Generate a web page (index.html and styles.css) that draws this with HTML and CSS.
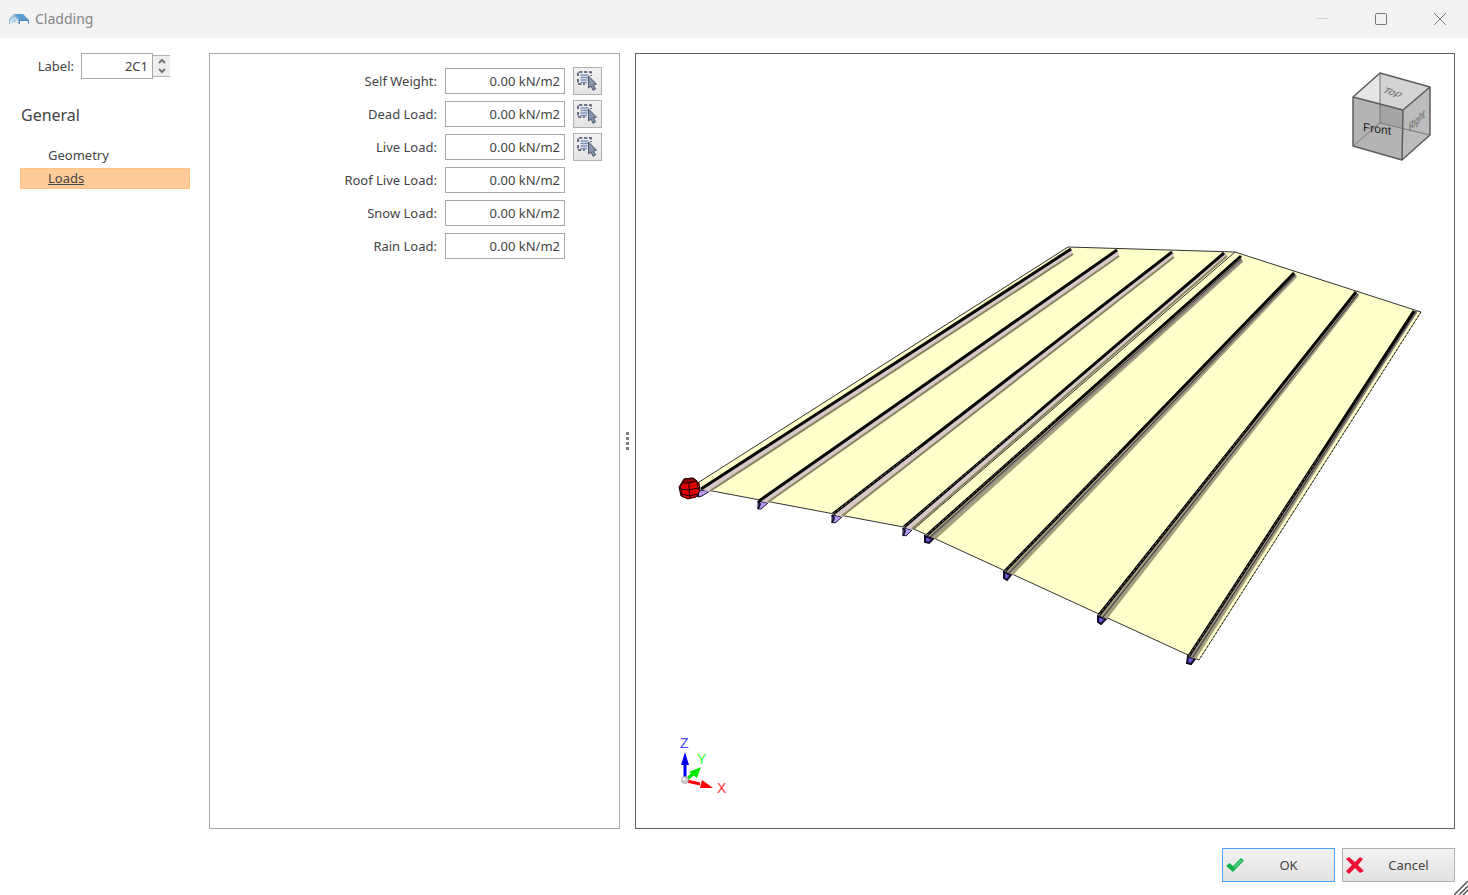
FILE: index.html
```html
<!DOCTYPE html>
<html lang="en">
<head>
<meta charset="utf-8">
<title>Cladding</title>
<link rel="stylesheet" href="styles.css">
</head>
<body>
<svg class="defs" aria-hidden="true">
  <symbol id="pick" viewBox="0 0 22 22">
    <path d="M1 6V2H14V6M1 9V14H8" fill="none" stroke="#474e68" stroke-width="1.6" stroke-dasharray="3.4 1.6"/>
    <path d="M3.500 5H11.500M3.500 7.500H11.500M3.500 10H10.500M3.500 12.500H10" stroke="#7d90bd" stroke-width="1.300"/>
    <path d="M11.500 6L19.500 14.200L16.500 14.700L18.500 19L16 20.300L14 16L11.500 18Z" fill="#8693a8" stroke="#4d586b" stroke-width="1"/>
  </symbol>
</svg>
<header class="titlebar">
  <svg class="app-icon" viewBox="0 0 20 12" aria-hidden="true">
    <path d="M5 1H14L20 7H10Z" fill="#5c9bd0"/>
    <path d="M5 1L0 6V11H1.200V7L5 4L9 7V11H10V6Z" fill="#8dbade"/>
    <path d="M10 7H20V11H19V8H11V11H10Z" fill="#4f87b8"/>
    <path d="M1 7H9M5 3V10M2 10L5 7L8 10" stroke="#8dbade" stroke-width=".8" fill="none"/>
  </svg>
  <h1 class="title">Cladding</h1>
  <button class="win-btn" aria-label="Minimize" disabled><svg viewBox="0 0 14 14"><path d="M2 6.500H14" stroke="#d4d4d4"/></svg></button>
  <button class="win-btn" aria-label="Maximize"><svg viewBox="0 0 14 14"><rect x="2.500" y="1.500" width="11" height="11" rx="1" fill="none" stroke="#777"/></svg></button>
  <button class="win-btn" aria-label="Close"><svg viewBox="0 0 14 14"><path d="M2 1L14 13M14 1L2 13" stroke="#777" fill="none"/></svg></button>
</header>

<main class="content">
  <aside class="sidebar">
    <div class="label-row">
      <label for="lbl">Label:</label>
      <input id="lbl" class="field label-input" type="text" value="2C1">
      <div class="spin">
        <button aria-label="Increase"><svg viewBox="0 0 8 6"><path d="M1 5L4 2L7 5" fill="none" stroke="#777" stroke-width="2"/></svg></button>
        <button aria-label="Decrease"><svg viewBox="0 0 8 6"><path d="M1 1L4 4L7 1" fill="none" stroke="#777" stroke-width="2"/></svg></button>
      </div>
    </div>
    <h2 class="group">General</h2>
    <nav class="nav">
      <a href="#geometry">Geometry</a>
      <a href="#loads" class="active" aria-current="page">Loads</a>
    </nav>
  </aside>

  <section class="form" aria-label="Loads">
    <label for="self">Self Weight:</label><input id="self" class="field" value="0.00 kN/m2"><button class="pick" aria-label="Pick self weight"><svg><use href="#pick"/></svg></button>
    <label for="dead">Dead Load:</label><input id="dead" class="field" value="0.00 kN/m2"><button class="pick" aria-label="Pick dead load"><svg><use href="#pick"/></svg></button>
    <label for="live">Live Load:</label><input id="live" class="field" value="0.00 kN/m2"><button class="pick" aria-label="Pick live load"><svg><use href="#pick"/></svg></button>
    <label for="roof">Roof Live Load:</label><input id="roof" class="field" value="0.00 kN/m2">
    <label for="snow">Snow Load:</label><input id="snow" class="field" value="0.00 kN/m2">
    <label for="rain">Rain Load:</label><input id="rain" class="field" value="0.00 kN/m2">
  </section>

  <div class="splitter" role="separator" aria-orientation="vertical"><i></i><i></i><i></i><i></i></div>

  <section class="viewer" aria-label="3D view">
    <svg class="scene" viewBox="636 54 818 774">
      <path d="M696 484L1068 247L1235 252L1421 312L1199 660L914 529L707 490Z" fill="#ffffcc"/>
      <g stroke="#333" stroke-width="1" fill="none">
        <path d="M696 484L1068 247L1235 252L1421 312M914 529L707 490M914 529L1199 660"/>
        <path d="M1421 312L1199 660" stroke="#8a8a70"/>
        <path d="M1421 312L1199 660" stroke="#111" stroke-dasharray="2 2"/>
        <path d="M914 529L1235 252"/>
      </g>
      <g fill="#b79cf5" stroke="#17122e" stroke-width="1">
        <path d="M699 490L710 491L702 496L698 497Z"/>
        <path d="M758 501L768 503L761 509L758 509Z"/>
        <path d="M832 515L842 517L835 523L832 522Z"/>
        <path d="M903 528L912 530L906 536L903 535Z"/>
        <path d="M698 490V497M758 501L760 504L758 509M832 515L834 518L832 523M903 528L905 531L903 536" stroke-width="2" fill="none"/>
      </g>
      <g fill="#6f55d0" stroke="#120d2a" stroke-width="2">
        <path d="M925 536L933 539L929 543L925 542Z"/>
        <path d="M1004 572L1011 575L1007 580L1004 578Z"/>
        <path d="M1098 616L1106 619L1101 624L1098 622Z"/>
        <path d="M1188 656L1195 659L1191 664L1187 663Z"/>
      </g>
      <g fill="#d8c8c8">
        <path d="M700 489L1071 248L1073 254L710 492Z"/>
        <path d="M758 500L1118 250L1119 255L768 503Z"/>
        <path d="M832 514L1173 251L1174 256L842 517Z"/>
        <path d="M903 527L1225 252L1228 255L912 530Z"/>
      </g>
      <g stroke="#8a8460" stroke-width="2" fill="none">
        <path d="M710 491L1073 254M768 502L1119 256M842 516L1174 257M912 529L1227 256"/>
      </g>
      <g fill="#a39f7c">
        <path d="M926 535L1240 256L1243 262L936 539Z"/>
        <path d="M1004 571L1294 272L1297 277L1013 575Z"/>
        <path d="M1098 615L1356 291L1359 296L1107 619Z"/>
        <path d="M1188 656L1413 310L1418 311L1196 659Z"/>
      </g>
      <g stroke="#8d7f84" stroke-width="2" fill="none">
        <path d="M931 537L1242 260M1009 573L1296 275M1103 617L1358 294M1192 658L1417 311"/>
      </g>
      <g stroke="#3a3433" stroke-width="1" fill="none">
        <path d="M930 537L1241 259M1009 573L1295 275M1103 617L1358 294M1193 657L1416 311"/>
      </g>
      <g stroke="#080808" stroke-width="3" fill="none">
        <path d="M701 489L1071 249M759 501L1117 250M833 514L1172 252M904 527L1224 253M927 535L1241 256M1005 571L1294 273M1099 615L1356 292M1189 656L1414 311"/>
      </g>
      <g stroke="#6d6468" stroke-width="1" stroke-dasharray="3 2" fill="none">
        <path d="M833 514L918 448M904 527L1034 415M927 535L1058 418M1005 571L1120 452M1099 615L1250 425M1189 656L1320 455"/>
      </g>
      <g stroke="#160000" stroke-width="1">
        <path d="M684 479L693 478L699 483L700 491L696 497L688 499L681 496L679 487Z" fill="#e00000"/>
        <path d="M684 479L693 478L697 481L689 483L682 483Z" fill="#900000"/>
        <path d="M682 483L680 489L689 490L698 488M689 483L689 490L690 498M697 482L698 488L700 491M682 496L681 489M690 496L697 494M682 494L690 496" fill="none"/>
      </g>
    </svg>
    <svg class="cube" viewBox="0 0 80 90" role="img" aria-label="View cube">
      <path d="M29 1L79 15L52 38L2 25Z" fill="#d4d4d4"/>
      <path d="M29 1V31L2 25Z" fill="#e6e6e6"/>
      <path d="M2 25L52 38L51 88L2 74Z" fill="#b4b4b4"/>
      <path d="M52 38L79 15V63L51 88Z" fill="#bcbcbc"/>
      <path d="M29 32L52 38V56L29 51Z" fill="#a4a4a4"/>
      <path d="M29 1V51L2 74M29 51L79 63" fill="none" stroke="#777"/>
      <path d="M29 1L79 15L52 38L2 25ZM2 25V74L51 88L79 63V15M52 38L51 88" fill="none" stroke="#5c5c5c" stroke-width="1.500" stroke-linejoin="round"/>
      <text class="face" transform="matrix(1 .14 0 1 12 59)" font-size="12">Front</text>
      <text class="face dim" transform="matrix(.96 .26 -.6 .55 30 20)" font-size="12">Top</text>
      <text class="face dim" transform="matrix(.56 -.54 0 1 58 60)" font-size="12">Right</text>
    </svg>
    <svg class="triad" viewBox="0 0 50 64" role="img" aria-label="Axes">
      <path d="M7 46V29" stroke="#0000f0" stroke-width="3"/><path d="M7 18L11 31H3Z" fill="#0000f0"/>
      <path d="M8 46L15 40" stroke="#00e000" stroke-width="3"/><path d="M23 33L19 44L11 38Z" fill="#00ea00"/>
      <path d="M9 47L22 50" stroke="#f00" stroke-width="3"/><path d="M35 54L24 46L22 54Z" fill="#f00"/>
      <circle cx="7" cy="46" r="3.500" fill="#ccc" stroke="#999" stroke-width=".6"/><circle cx="6" cy="45" r="1.300" fill="#fff"/>
      <text x="2" y="14" fill="#4545ff">Z</text><text x="19" y="30" fill="#2cff2c">Y</text><text x="39" y="59" fill="#ff2c2c">X</text>
    </svg>
  </section>
</main>

<footer class="actions">
  <button class="action primary"><svg viewBox="0 0 20 18" aria-hidden="true"><path d="M1 10L4.500 7L8 10L16 2L19 4.500L8 16Z" fill="#11b34c"/><path d="M9 10.500L16 3.500L17.500 4.800L9 13Z" fill="#58cf83"/></svg><span>OK</span></button>
  <button class="action"><svg viewBox="0 0 20 18" aria-hidden="true"><path d="M4 1L10 6L15 1L18 3L13 9L19 15L15 17L10 12L4 18L1 15L7 9L1 3Z" fill="#ee1135"/></svg><span>Cancel</span></button>
  <svg class="grip" viewBox="0 0 14 14" aria-hidden="true"><path d="M0 14L14 0M5 14L14 5M9 14L14 9" stroke="#555" stroke-width="1.500"/></svg>
</footer>
</body>
</html>
```

FILE: styles.css
```css
* { box-sizing: border-box; }

body {
  margin: 0;
  min-height: 100vh;
  display: flex;
  flex-direction: column;
  background: #fff;
  color: #444;
  font: 13px/20px "Noto Sans", "Open Sans", sans-serif;
}

button, input { font: inherit; color: inherit; margin: 0; }
svg { display: block; }
.defs { width: 0; height: 0; position: absolute; }

.titlebar {
  height: 38px;
  display: flex;
  align-items: center;
  padding-left: 9px;
  background: #f3f3f3;
}
.app-icon { width: 20px; height: 12px; }
.title {
  flex: 1;
  margin: 0 0 0 6px;
  font-size: 14px;
  font-weight: 400;
  color: #858585;
}
.win-btn {
  width: 59px;
  height: 38px;
  padding: 0;
  display: grid;
  place-items: center;
  border: 0;
  background: none;
}
.win-btn svg { width: 14px; height: 14px; }

.content {
  flex: 1;
  display: flex;
  padding: 15px 13px 0 0;
}

.sidebar { width: 209px; padding-right: 19px; }
.label-row {
  display: flex;
  align-items: center;
  justify-content: flex-end;
  padding-right: 20px;
}
.label-row label { margin-right: 7px; }
.field {
  width: 100%;
  height: 26px;
  padding: 0 4px;
  border: 1px solid #a8a8a8;
  background: #fff;
  text-align: right;
  outline: 0;
}
.label-input { width: 72px; }
.spin {
  width: 17px;
  height: 22px;
  display: flex;
  flex-direction: column;
  border: 1px solid #b4b4b4;
  border-width: 1px 0;
  background: #efefef;
}
.spin button {
  flex: 1;
  display: grid;
  place-items: center;
  padding: 0;
  border: 0;
  background: none;
}
.spin svg { width: 8px; height: 6px; }
.group {
  margin: 24px 0 0 21px;
  font-size: 16px;
  line-height: 24px;
  font-weight: 400;
}
.nav { margin: 18px 0 0 20px; }
.nav a {
  display: block;
  height: 21px;
  margin-bottom: 2px;
  padding-left: 28px;
  color: inherit;
  text-decoration: none;
}
.nav .active {
  background: #ffcc99;
  border: 1px solid #ffc080;
  padding-left: 27px;
  line-height: 18px;
  text-decoration: underline;
}

.form {
  width: 411px;
  display: grid;
  grid-template-columns: 1fr 120px 29px;
  grid-auto-rows: 28px;
  gap: 5px 8px;
  align-content: start;
  align-items: center;
  padding: 13px 17px 0 0;
  border: 1px solid #a8a8a8;
}
.form label { grid-column: 1; text-align: right; }
.pick {
  width: 29px;
  height: 28px;
  padding: 0;
  display: grid;
  place-items: center;
  border: 1px solid #b0b0b0;
  background: linear-gradient(#f2f2f2, #e4e4e4);
}
.pick svg { width: 22px; height: 22px; }

.splitter {
  width: 15px;
  display: flex;
  flex-direction: column;
  align-items: center;
  justify-content: center;
  gap: 2px;
}
.splitter i { width: 3px; height: 3px; background: #808080; }

.viewer {
  flex: 1;
  min-width: 0;
  position: relative;
  border: 1px solid #606060;
}
.scene { position: absolute; inset: 0; width: 100%; height: 100%; }
.cube { position: absolute; top: 18px; right: 23px; width: 80px; height: 90px; }
.face { font-family: "Liberation Sans", sans-serif; fill: #222; }
.dim { fill: #666; }
.triad { position: absolute; left: 42px; bottom: 30px; width: 50px; height: 64px; }
.triad text { font: 14px "Liberation Sans", sans-serif; }

.actions {
  position: relative;
  display: flex;
  justify-content: flex-end;
  gap: 7px;
  padding: 19px 13px 13px;
}
.action {
  width: 113px;
  height: 34px;
  display: flex;
  align-items: center;
  padding: 0 2px;
  border: 1px solid #b0b0b0;
  background: linear-gradient(#f2f2f2, #e2e2e2);
}
.action svg { width: 20px; height: 18px; }
.action span { flex: 1; }
.primary { border-color: #4da1f5; }
.grip { position: absolute; right: 0; bottom: 0; width: 14px; height: 14px; }
```
